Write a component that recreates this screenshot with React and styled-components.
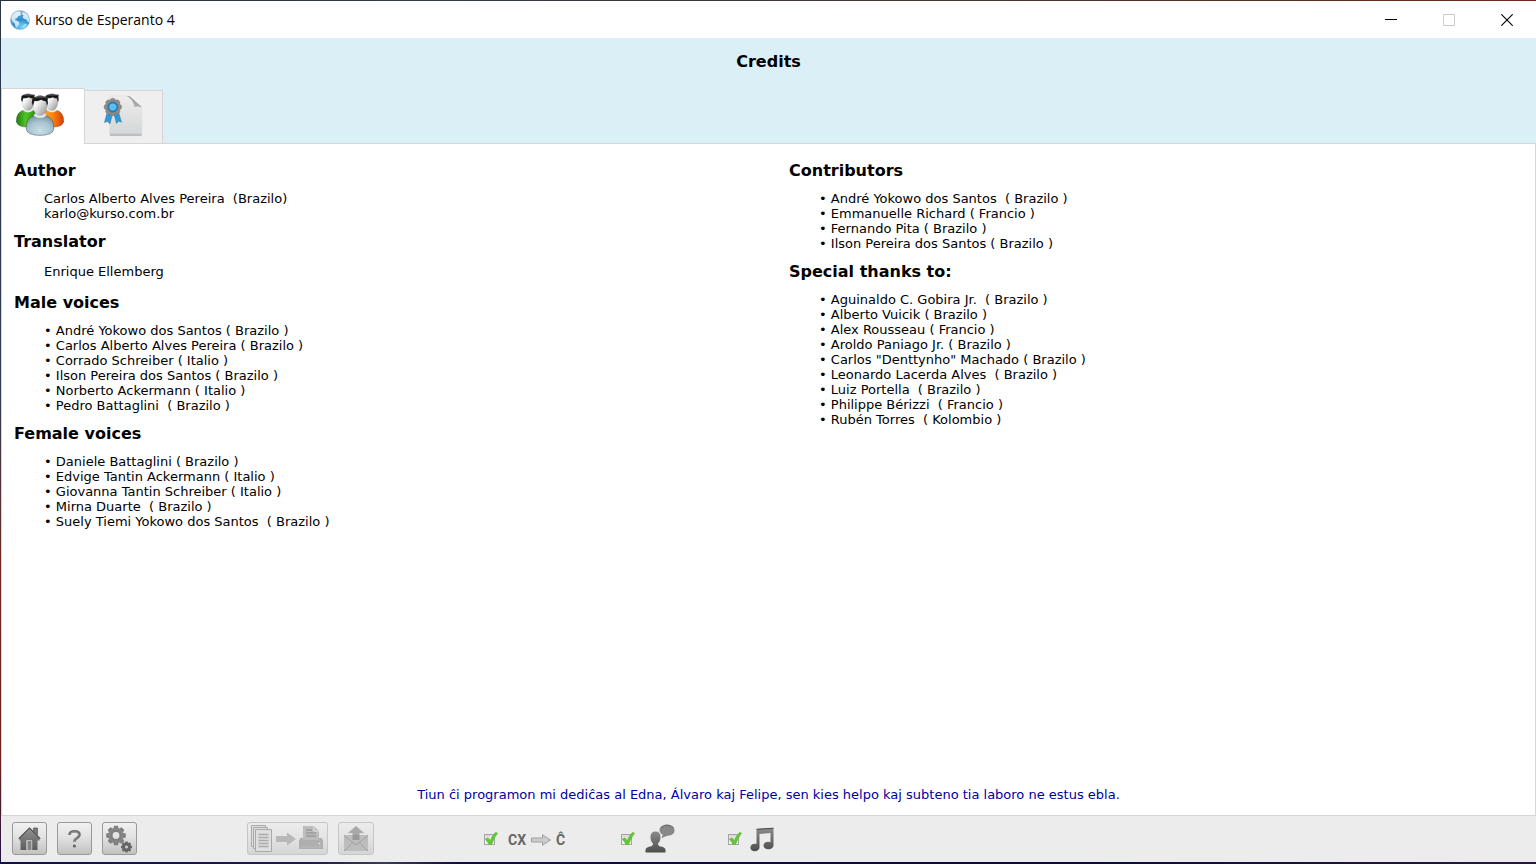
import React, { useState } from "react";
import styled, { createGlobalStyle } from "styled-components";

const GlobalStyle = createGlobalStyle`
  *, *::before, *::after { box-sizing: border-box; }
  body { margin: 0; }
  button, input { font: inherit; color: inherit; }
`;

const line = "#d6d6d6";

const Desktop = styled.div`
  min-height: 100vh;
  display: flex;
  flex-direction: column;
  padding: 1px 0 2px 1px;
  background:
    linear-gradient(90deg, #131048, #1b1a4e 20%, #3a3d52 25%, #0e0c44 30%, #0b0a3c 70%, #2a1644) bottom / 100% 2px no-repeat,
    linear-gradient(90deg, #26303f, #333b46 30%, #46352c 65%, #6a2a1e) top / 100% 1px no-repeat,
    linear-gradient(180deg, #2a3547, #30405a 45%, #6e2a22 65%, #6b241f 88%, #1d1440);
  font-family: "DejaVu Sans", sans-serif;
  font-size: 13px;
  line-height: 15px;
  color: #000;
`;

const Window = styled.div`
  flex: 1;
  display: flex;
  flex-direction: column;
  background: #fff;
`;

const TitleBar = styled.div`
  display: flex;
  align-items: center;
  height: 37px;
  padding-left: 9px;
  gap: 5px;
  font-family: "Open Sans", "Noto Sans", sans-serif;
  font-size: 14px;
  line-height: 20px;
`;

const TitleText = styled.span`
  flex: 1;
`;

const WindowButtons = styled.div`
  display: flex;
`;

const WindowButton = styled.button`
  display: flex;
  align-items: center;
  justify-content: center;
  width: 58px;
  height: 36px;
  padding: 0;
  border: 0;
  background: transparent;
`;

const Header = styled.header`
  display: flex;
  flex-direction: column;
  gap: 2px;
  background: #daeff6;
  box-shadow: inset 0 -1px ${line};
`;

const PageTitle = styled.h1`
  margin: 0;
  font-size: 16px;
  line-height: 48px;
  font-weight: bold;
  text-align: center;
`;

const Tabs = styled.div`
  display: flex;
  align-items: flex-end;
`;

const Tab = styled.button`
  display: flex;
  justify-content: center;
  align-items: flex-start;
  width: ${(p) => (p.$active ? 84 : 78)}px;
  height: ${(p) => (p.$active ? 56 : 54)}px;
  padding: 4px ${(p) => (p.$active ? 6 : 2)}px 0 0;
  border: solid ${line};
  border-width: ${(p) => (p.$active ? "1px 1px 0 1px" : "1px 1px 1px 0")};
  background: ${(p) => (p.$active ? "#fff" : "#efefef")};
`;

const Content = styled.main`
  flex: 1;
  display: flex;
  flex-direction: column;
  justify-content: space-between;
  padding: 16px 0 13px 12px;
  border: solid ${line};
  border-width: 0 1px 1px 1px;
`;

const Columns = styled.div`
  display: grid;
  grid-template-columns: 1fr 1fr;
  column-gap: 29px;
`;

const Column = styled.div`
  display: flex;
  flex-direction: column;
  gap: 10px;
`;

const Heading = styled.h2`
  margin: 0;
  font-size: 16px;
  line-height: 22px;
  font-weight: bold;
`;

const Names = styled.ul`
  margin: 9px 0 0;
  padding: 0 0 0 30px;
  list-style: none;
  white-space: pre-wrap;
`;

const Name = styled.li`
  &::before {
    content: "• ";
  }
`;

const Plain = styled.p`
  margin: ${(p) => (p.$loose ? "11px 0 3px" : "9px 0 0")};
  padding-left: 30px;
  white-space: pre-wrap;
`;

const Dedication = styled.p`
  margin: 0 12px 0 0;
  text-align: center;
  color: #0000a0;
`;

const Footer = styled.footer`
  display: flex;
  align-items: center;
  height: 46px;
  padding: 0 0 1px 11px;
  background: #ececec;
`;

const ButtonGroup = styled.div`
  display: flex;
  align-items: center;
  gap: 10px;
  margin-right: 110px;
`;

const ToolButton = styled.button`
  display: flex;
  align-items: center;
  justify-content: center;
  width: ${(p) => p.$width || 35}px;
  height: 33px;
  padding: 0;
  border: 1px solid #999;
  border-radius: 3px;
  background: linear-gradient(#f1f1f1, #e2e2e2 45%, #c2c2c2);

  &:disabled {
    border-color: #c6c6c6;
    background: linear-gradient(#ececec, #e4e4e4 45%, #d5d5d5);
  }
`;

const Option = styled.label`
  display: flex;
  align-items: center;
  gap: ${(p) => p.$gap}px;
  margin-right: ${(p) => p.$after || 0}px;
`;

const CheckHolder = styled.span`
  position: relative;
  display: flex;
  width: 14px;
  height: 16px;
  align-items: center;

  svg {
    position: absolute;
    inset: 0;
    pointer-events: none;
  }
`;

const CheckInput = styled.input`
  appearance: none;
  width: 11px;
  height: 11px;
  margin: 2px 0 0;
  border: 1px solid #a4a4a4;
  background: linear-gradient(#dadada, #f5f5f5);
`;

const Convert = styled.span`
  display: flex;
  align-items: center;
  gap: 5px;
  padding-top: 3px;
  font-family: Roboto, sans-serif;
  font-size: 14px;
  font-weight: bold;
  color: #666;
`;

const GlobeIcon = () => (
  <svg width="20" height="20" viewBox="0 0 20 20" aria-hidden="true">
    <defs>
      <radialGradient id="sea" cx="0.6" cy="0.85" r="0.85">
        <stop offset="0" stopColor="#6fd8fc" />
        <stop offset="0.45" stopColor="#2c8cca" />
        <stop offset="1" stopColor="#86aed0" />
      </radialGradient>
      <linearGradient id="land" x1="0" y1="0" x2="0" y2="1">
        <stop offset="0" stopColor="#e8f1f8" />
        <stop offset="1" stopColor="#b4def4" />
      </linearGradient>
    </defs>
    <circle cx="10" cy="10" r="9.6" fill="url(#sea)" stroke="#9db8cb" strokeWidth=".6" />
    <path d="M1.3 7 3 4.2 6 2 9 1.2l2 .8-1 1.2 1.500.7-1.200 1.500-2 .6-1.200 2-2 .7.4 1.700 2 .3 2 2-.3 2.200-1.500 1-.3 2.400-2-1.600-.6-3-2.200-2.300-1.300-2.800z" fill="url(#land)" />
    <path d="M12.300 2.300 15.500 3l2.500 2.600 1.300 3.600-.3 3-1.800-.8-1-2.200-2.300-.3-1.300-2 1-1.600-1.600-1z" fill="url(#land)" />
    <path d="m13 15.500 2.600-2 1.600.6-2 2.900-2.600 1.200z" fill="#a5e2fa" />
  </svg>
);

const Person = ({ x, y, body, scale = 1 }) => (
  <g transform={`translate(${x} ${y}) scale(${scale})`}>
    <path d="M-14 33Q-14 23-6 20L0 18l6 2Q14 23 14 33 13 40 0 40t-14-7z" fill={`url(#${body})`} stroke="#333" strokeOpacity=".5" strokeWidth=".8" />
    <path d="M-6.500 20Q0 25 6.500 20L4 17h-8z" fill="#e6e9ea" />
    <ellipse cx="0" cy="10.500" rx="7" ry="9.600" fill="url(#face)" stroke="#777" strokeOpacity=".5" strokeWidth=".5" />
    <path d="M-7 10.500-8.300 7-7.600 3Q-6 1-3.500 1 0-1 3.500.800L8.300 1.500 7.600 4 8 8 7 10.500 6 6Q3 5.800 1 4.400-2.500 6.500-5.400 5.300z" fill="url(#hair)" />
  </g>
);

const PeopleIcon = () => (
  <svg width="48" height="44" viewBox="0 0 48 44" aria-hidden="true">
    <defs>
      <linearGradient id="face" x1="0" y1="0" x2="1" y2="1">
        <stop offset="0.3" stopColor="#fafafa" />
        <stop offset="1" stopColor="#8e8e8e" />
      </linearGradient>
      <linearGradient id="hair" x1="0" y1="0" x2="0" y2="1">
        <stop offset="0" stopColor="#777" />
        <stop offset="0.35" stopColor="#151515" />
        <stop offset="1" stopColor="#333" />
      </linearGradient>
      <linearGradient id="green" x1="0" y1="0" x2="1" y2="0">
        <stop offset="0" stopColor="#1f7d10" />
        <stop offset="0.4" stopColor="#4fc527" />
        <stop offset="1" stopColor="#1f7810" />
      </linearGradient>
      <linearGradient id="orange" x1="0" y1="0" x2="1" y2="0">
        <stop offset="0" stopColor="#ffb52e" />
        <stop offset="0.55" stopColor="#fb8110" />
        <stop offset="1" stopColor="#d83c00" />
      </linearGradient>
      <radialGradient id="blue" cx="0.5" cy="0.8" r="0.7">
        <stop offset="0" stopColor="#c9dfe9" />
        <stop offset="0.6" stopColor="#a9c3cf" />
        <stop offset="1" stopColor="#7896a5" />
      </radialGradient>
    </defs>
    <Person x={12} y={0.500} body="green" scale={0.84} />
    <Person x={36} y={0.500} body="orange" scale={0.84} />
    <Person x={24} y={2.400} body="blue" scale={1} />
  </svg>
);

const LicenseIcon = () => (
  <svg width="40" height="42" viewBox="0 0 40 42" aria-hidden="true">
    <defs>
      <linearGradient id="paper" x1="0" y1="0" x2="0" y2="1">
        <stop offset="0" stopColor="#ededed" />
        <stop offset="1" stopColor="#d4d5d6" />
      </linearGradient>
      <linearGradient id="fold" x1="0" y1="1" x2="1" y2="0">
        <stop offset="0" stopColor="#d0d0d0" />
        <stop offset="1" stopColor="#777" />
      </linearGradient>
      <radialGradient id="seal">
        <stop offset="0" stopColor="#9be2ff" />
        <stop offset="0.6" stopColor="#2f9fdc" />
        <stop offset="1" stopColor="#1c6da9" />
      </radialGradient>
    </defs>
    <path d="M7.500.8h17L39 12.500V39.500a1.500 1.500 0 0 1-1.500 1.500H8A1.500 1.500 0 0 1 6.500 39.500V1.800a1 1 0 0 1 1-1z" fill="url(#paper)" stroke="#dcdcdc" strokeWidth=".5" />
    <path d="M7 38.800h31.500V40a1 1 0 0 1-1 1H8a1 1 0 0 1-1-1z" fill="#bebebf" />
    <path d="M23.500.8Q30 4 31.500 12q3-1.300 7.500.3L27 1.500z" fill="url(#fold)" />
    <path d="M4 18 1.500 27.500l3-1 2.500 2.300L9.500 19zM11 19l2.500 9.500 2-2.300 3 1L15.500 17z" fill="#3696cf" stroke="#2579af" strokeWidth=".5" />
    <g fill="#8c8c8c" stroke="#747474" strokeWidth=".4">
      {[0, 45, 90, 135, 180, 225, 270, 315].map((a) => (
        <circle key={a} cx="9.800" cy="5.900" r="2.700" transform={`rotate(${a} 9.800 12)`} />
      ))}
    </g>
    <circle cx="9.800" cy="12" r="5.200" fill="url(#seal)" stroke="#5b7486" strokeWidth=".6" />
    <circle cx="9.800" cy="12" r="2.800" fill="#53bdef" stroke="#9ad8f6" strokeWidth=".5" />
  </svg>
);

const GreyGradient = ({ id, from = "#8b8b8b", to = "#4d4d4d" }) => (
  <defs>
    <linearGradient id={id} x1="0" y1="0" x2="0" y2="1">
      <stop offset="0" stopColor={from} />
      <stop offset="1" stopColor={to} />
    </linearGradient>
  </defs>
);

const HomeIcon = () => (
  <svg width="23" height="25" viewBox="0 0 23 25" aria-hidden="true">
    <GreyGradient id="home" from="#8c8c8c" to="#5d5d5d" />
    <path d="M15.500 2h4v6.500L15.500 5z" fill="#777" stroke="#555" strokeWidth=".7" />
    <path d="M1.500 12.500 11.500 3.500l10 9v2h-2V24H13.500V14.500h-5V24h-6v-9.500h-1z" fill="url(#home)" />
    <path d="M.8 12.800 11.500 2.200l10.700 10.600" fill="none" stroke="#4c4c4c" strokeWidth="1.200" />
    <path d="M9.500 15h3.500v9H9.500z" fill="#858585" />
    <path d="M8.800 24V14.500h5V24" fill="none" stroke="#ccc" strokeWidth=".7" />
  </svg>
);

const HelpIcon = () => (
  <svg width="15" height="20" viewBox="0 0 15 20" aria-hidden="true">
    <path d="M2.500 6Q2.500 2.300 7.500 2.300t5 3.300q0 2.100-2.700 3.500-2.300 1.200-2.300 3.700" fill="none" stroke="#707070" strokeWidth="2.600" />
    <path d="M3.300 5Q4 2.800 7.500 2.800q4 0 4.100 3-.1 1.800-2.600 3-2 1.200-2 3.700" fill="none" stroke="#9a9a9a" strokeWidth=".9" />
    <circle cx="7.400" cy="17" r="1.600" fill="#646464" />
  </svg>
);

const Gear = ({ cx, cy, r, hole, teeth, fill }) => (
  <g fill={fill}>
    {Array.from({ length: teeth }, (_, i) => (
      <path
        key={i}
        d={`M${cx - r * 0.2} ${cy - r}h${r * 0.4}l${r * 0.1} ${r * 0.4}h${-r * 0.6}z`}
        transform={`rotate(${(i * 360) / teeth} ${cx} ${cy})`}
      />
    ))}
    <circle cx={cx} cy={cy} r={(r * 0.76 + hole) / 2} fill="none" stroke={fill} strokeWidth={r * 0.76 - hole} />
  </g>
);

const GearsIcon = () => (
  <svg width="27" height="28" viewBox="0 0 27 28" aria-hidden="true">
    <Gear cx={10} cy={10.500} r={9.800} hole={3.400} teeth={8} fill="#808080" />
    <Gear cx={20.500} cy={22} r={5.500} hole={1.500} teeth={8} fill="#666" />
    <circle cx="10" cy="10.500" r="6.600" fill="none" stroke="#929292" strokeWidth=".7" />
  </svg>
);

const PrintIcon = () => (
  <svg width="73" height="28" viewBox="0 0 73 28" aria-hidden="true">
    <g fill="#dedede" stroke="#aaa">
      <path d="M.5.5h14v21H.5z" />
      <path d="M2.500 2.500h14v21h-14z" />
      <path d="M4.500 4.500h16v22h-16z" />
    </g>
    <path d="M7.500 9.500h10m-10 3h10m-10 3h10m-10 3h10m-10 3h10" stroke="#aaa" strokeWidth="1.400" />
    <path d="M25 11h11V7.500l9 6.500-9 6.500V17H25z" fill="#b8b8b8" />
    <path d="M52 1h11l5 5v9H52z" fill="#bcbcbc" />
    <path d="M63 1v5h5" fill="none" stroke="#e2e2e2" />
    <path d="M55 5h6m-6 3h10m-10 3h10" stroke="#999" strokeWidth="1.300" />
    <path d="M49.500 13H52v2h16v-2h2.500l1.500 2.500V24H48v-8.500z" fill="#aeaeae" />
    <path d="M50 22h20" stroke="#bbb" />
    <circle cx="68.500" cy="18.500" r="1" fill="#e0e0e0" />
  </svg>
);

const MailIcon = () => (
  <svg width="24" height="27" viewBox="0 0 24 27" aria-hidden="true">
    <path d="M0 10h24v16H0z" fill="#bdbdbd" />
    <path d="M0 10.500 12 20l12-9.500M0 26l9-8.500M24 26l-9-8.500" fill="none" stroke="#9a9a9a" strokeWidth=".8" />
    <path d="M12 1 20 8h-4.500v7h-7V8H4z" fill="#a8a8a8" stroke="#c2c2c2" strokeWidth=".6" />
    <path d="M8.500 10h7v5h-7z" fill="#999" />
  </svg>
);

const ArrowIcon = () => (
  <svg width="20" height="12" viewBox="0 0 20 12" aria-hidden="true">
    <path d="M.5 4h11V.8l8 5.200-8 5.200V8H.5z" fill="#ccc" stroke="#999" strokeWidth=".9" />
  </svg>
);

const SpeakerIcon = () => (
  <svg width="30" height="29" viewBox="0 0 30 29" aria-hidden="true">
    <GreyGradient id="speaker" />
    <path d="M5.500 13Q5.500 7.500 10.500 7.500T15.500 13q0 4.500-2.500 6.500 0 2.500 3 3 4.500 1 4.500 3.500V28.500H.5V26Q.5 23.500 5 22.500q3-.5 3-3-2.500-2-2.500-6.500z" fill="url(#speaker)" />
    <path d="M22 .8c4.500 0 7.500 2.300 7.500 5.500 0 4.200-3.700 5.500-8 5.700l-5 2.200 1.200-3.400C15.700 9.700 14.500 8.300 14.500 6.300 14.500 3.100 17.500.8 22 .8z" fill="#888" />
    <path d="M16 4Q18 1 22 1t6.500 3" fill="none" stroke="#5e5e5e" strokeWidth=".8" />
  </svg>
);

const MusicIcon = () => (
  <svg width="24" height="26" viewBox="0 0 24 26" aria-hidden="true">
    <GreyGradient id="music" />
    <path d="M6.500 3 23.500 2v17.500c0 2-2 3.700-5 3.700s-5-1.500-5-3.700 2-3.700 4.700-3.700q1.300 0 2.300.4V7l-11 1v13.500c0 2-2 3.700-4.700 3.700S.4 23.700.4 21.500s2-3.700 4.300-3.700q1 0 1.800.3z" fill="url(#music)" />
    <path d="M6.500 3.300 23.500 2.200" stroke="#494949" />
  </svg>
);

const OptionCheck = ({ label }) => {
  const [on, setOn] = useState(true);
  return (
    <CheckHolder>
      <CheckInput type="checkbox" aria-label={label} checked={on} onChange={() => setOn(!on)} />
      {on && (
        <svg width="14" height="16" viewBox="0 0 14 16" aria-hidden="true">
          <path d="m1.500 8 2.500-1 2.200 2.700Q8.500 4.500 11.500 1.500l2 .7Q9.500 7 7.500 13.500H5.300z" fill="#62c636" stroke="#5cbd32" strokeWidth=".8" />
        </svg>
      )}
    </CheckHolder>
  );
};

const NameList = ({ title, names }) => (
  <section>
    <Heading>{title}</Heading>
    <Names>
      {names.map((n) => (
        <Name key={n}>{n}</Name>
      ))}
    </Names>
  </section>
);

const maleVoices = [
  "André Yokowo dos Santos ( Brazilo )",
  "Carlos Alberto Alves Pereira ( Brazilo )",
  "Corrado Schreiber ( Italio )",
  "Ilson Pereira dos Santos ( Brazilo )",
  "Norberto Ackermann ( Italio )",
  "Pedro Battaglini  ( Brazilo )",
];

const femaleVoices = [
  "Daniele Battaglini ( Brazilo )",
  "Edvige Tantin Ackermann ( Italio )",
  "Giovanna Tantin Schreiber ( Italio )",
  "Mirna Duarte  ( Brazilo )",
  "Suely Tiemi Yokowo dos Santos  ( Brazilo )",
];

const contributors = [
  "André Yokowo dos Santos  ( Brazilo )",
  "Emmanuelle Richard ( Francio )",
  "Fernando Pita ( Brazilo )",
  "Ilson Pereira dos Santos ( Brazilo )",
];

const thanks = [
  "Aguinaldo C. Gobira Jr.  ( Brazilo )",
  "Alberto Vuicik ( Brazilo )",
  "Alex Rousseau ( Francio )",
  "Aroldo Paniago Jr. ( Brazilo )",
  'Carlos "Denttynho" Machado ( Brazilo )',
  "Leonardo Lacerda Alves  ( Brazilo )",
  "Luiz Portella  ( Brazilo )",
  "Philippe Bérizzi  ( Francio )",
  "Rubén Torres  ( Kolombio )",
];

export default function App() {
  return (
    <Desktop>
      <GlobalStyle />
      <Window>
        <TitleBar>
          <GlobeIcon />
          <TitleText>Kurso de Esperanto 4</TitleText>
          <WindowButtons>
            <WindowButton aria-label="Minimize">
              <svg width="12" height="12" viewBox="0 0 12 12">
                <path d="M0 5.500h12" stroke="#000" />
              </svg>
            </WindowButton>
            <WindowButton aria-label="Maximize" disabled>
              <svg width="12" height="12" viewBox="0 0 12 12">
                <path d="M.5.5h11v11H.5z" fill="none" stroke="#ccc" />
              </svg>
            </WindowButton>
            <WindowButton aria-label="Close">
              <svg width="12" height="12" viewBox="0 0 12 12">
                <path d="m.3.3 11.400 11.400M11.700.3.3 11.700" stroke="#000" strokeWidth="1.100" />
              </svg>
            </WindowButton>
          </WindowButtons>
        </TitleBar>
        <Header>
          <PageTitle>Credits</PageTitle>
          <Tabs role="tablist">
            <Tab role="tab" aria-selected="true" aria-label="Credits" $active>
              <PeopleIcon />
            </Tab>
            <Tab role="tab" aria-selected="false" aria-label="License">
              <LicenseIcon />
            </Tab>
          </Tabs>
        </Header>
        <Content>
          <Columns>
            <Column>
              <section>
                <Heading>Author</Heading>
                <Plain>
                  {"Carlos Alberto Alves Pereira  (Brazilo)"}
                  <br />
                  karlo@kurso.com.br
                </Plain>
              </section>
              <section>
                <Heading>Translator</Heading>
                <Plain $loose>Enrique Ellemberg</Plain>
              </section>
              <NameList title="Male voices" names={maleVoices} />
              <NameList title="Female voices" names={femaleVoices} />
            </Column>
            <Column>
              <NameList title="Contributors" names={contributors} />
              <NameList title="Special thanks to:" names={thanks} />
            </Column>
          </Columns>
          <Dedication>
            Tiun ĉi programon mi dediĉas al Edna, Álvaro kaj Felipe, sen kies helpo kaj subteno tia laboro ne estus ebla.
          </Dedication>
        </Content>
        <Footer>
          <ButtonGroup>
            <ToolButton aria-label="Home">
              <HomeIcon />
            </ToolButton>
            <ToolButton aria-label="Help">
              <HelpIcon />
            </ToolButton>
            <ToolButton aria-label="Settings">
              <GearsIcon />
            </ToolButton>
          </ButtonGroup>
          <ButtonGroup>
            <ToolButton aria-label="Print" $width={81} disabled>
              <PrintIcon />
            </ToolButton>
            <ToolButton aria-label="Send" $width={36} disabled>
              <MailIcon />
            </ToolButton>
          </ButtonGroup>
          <Option $gap={10} $after={56}>
            <OptionCheck label="Convert CX to Ĉ" />
            <Convert>
              CX <ArrowIcon /> Ĉ
            </Convert>
          </Option>
          <Option $gap={10} $after={53}>
            <OptionCheck label="Voices" />
            <SpeakerIcon />
          </Option>
          <Option $gap={8}>
            <OptionCheck label="Music" />
            <MusicIcon />
          </Option>
        </Footer>
      </Window>
    </Desktop>
  );
}
